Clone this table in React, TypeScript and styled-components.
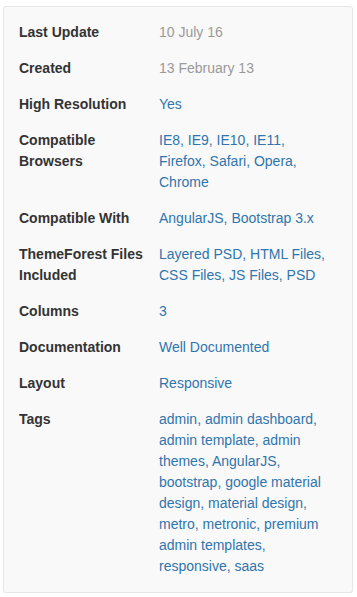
import React from "react";
import styled, { createGlobalStyle } from "styled-components";

const Global = createGlobalStyle`
  html, body { margin: 0; padding: 0; background: #ffffff; }
  body {
    font-family: "Liberation Sans", Arial, Helvetica, sans-serif;
    font-size: 14px;
    color: #333333;
  }
`;

const Card = styled.section`
  box-sizing: border-box;
  margin: 6px 0 0 3px;
  width: 350px;
  padding: 15px;
  background: #f9f9f9;
  border: 1px solid #e6e6e6;
  border-radius: 3px;
  box-shadow: 0 1px 1px rgba(0, 0, 0, 0.04);
`;

const Specs = styled.dl`
  display: grid;
  grid-template-columns: 140px 172px;
  row-gap: 15px;
  margin: 0;
  line-height: 21px;
`;

const Label = styled.dt`
  margin: 0;
  font-weight: bold;
  color: #333333;
`;

const Value = styled.dd<{ $muted?: boolean }>`
  margin: 0;
  color: ${(p) => (p.$muted ? "#999999" : "#3075ad")};
`;

const Link = styled.a`
  color: #3075ad;
  text-decoration: none;
`;

type Row = { label: React.ReactNode; values: string[]; muted?: boolean };

const rows: Row[] = [
  { label: "Last Update", values: ["10 July 16"], muted: true },
  { label: "Created", values: ["13 February 13"], muted: true },
  { label: "High Resolution", values: ["Yes"] },
  {
    label: (
      <>
        Compatible
        <br />
        Browsers
      </>
    ),
    values: ["IE8", "IE9", "IE10", "IE11", "Firefox", "Safari", "Opera", "Chrome"],
  },
  { label: "Compatible With", values: ["AngularJS", "Bootstrap 3.x"] },
  {
    label: (
      <>
        ThemeForest Files
        <br />
        Included
      </>
    ),
    values: ["Layered PSD", "HTML Files", "CSS Files", "JS Files", "PSD"],
  },
  { label: "Columns", values: ["3"] },
  { label: "Documentation", values: ["Well Documented"] },
  { label: "Layout", values: ["Responsive"] },
  {
    label: "Tags",
    values: [
      "admin",
      "admin dashboard",
      "admin template",
      "admin themes",
      "AngularJS",
      "bootstrap",
      "google material design",
      "material design",
      "metro",
      "metronic",
      "premium admin templates",
      "responsive",
      "saas",
    ],
  },
];

export default function App() {
  return (
    <>
      <Global />
      <Card>
        <Specs>
          {rows.map((row, i) => (
            <React.Fragment key={i}>
              <Label>{row.label}</Label>
              <Value $muted={row.muted}>
                {row.muted
                  ? row.values.join(", ")
                  : row.values.map((v, j) => (
                      <React.Fragment key={j}>
                        <Link href="#">{v}</Link>
                        {j < row.values.length - 1 ? ", " : ""}
                      </React.Fragment>
                    ))}
              </Value>
            </React.Fragment>
          ))}
        </Specs>
      </Card>
    </>
  );
}
